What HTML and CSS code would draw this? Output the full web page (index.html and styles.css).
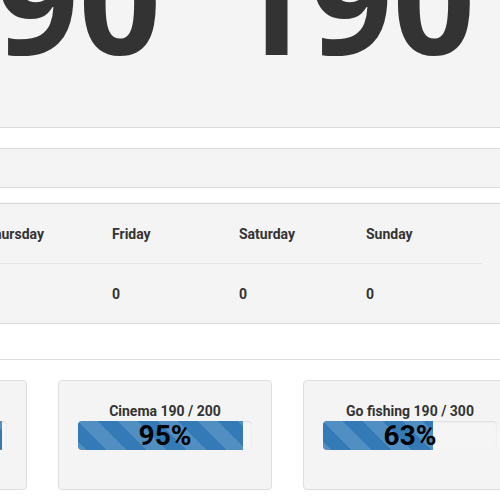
FILE: index.html
```html
<!DOCTYPE html>
<html>
<head>
<meta charset="utf-8">
<link rel="stylesheet" href="styles.css">
</head>
<body>
<div class="page">
  <section class="hero">
    <div class="big-row">
      <span class="big-number">190</span>
      <span class="big-number">190</span>
    </div>
  </section>
  <div class="spacer-a"></div>
  <div class="band"></div>
  <div class="spacer-b"></div>
  <section class="week-card">
    <div class="week-grid">
      <div class="cell head">Monday</div>
      <div class="cell head">Tuesday</div>
      <div class="cell head">Wednesday</div>
      <div class="cell head">Thursday</div>
      <div class="cell head">Friday</div>
      <div class="cell head">Saturday</div>
      <div class="cell head">Sunday</div>
      <div class="cell">0</div>
      <div class="cell">0</div>
      <div class="cell">0</div>
      <div class="cell">0</div>
      <div class="cell">0</div>
      <div class="cell">0</div>
      <div class="cell">0</div>
    </div>
  </section>
  <div class="spacer-c"></div>
  <section class="goals">
    <div class="goal-card">
      <div class="goal-title">Reading 190 / 195</div>
      <div class="progress">
        <div class="progress-fill" style="width:97%"></div>
        <div class="progress-label">97%</div>
      </div>
    </div>
    <div class="goal-card">
      <div class="goal-title">Cinema 190 / 200</div>
      <div class="progress">
        <div class="progress-fill" style="width:95%"></div>
        <div class="progress-label">95%</div>
      </div>
    </div>
    <div class="goal-card">
      <div class="goal-title">Go fishing 190 / 300</div>
      <div class="progress">
        <div class="progress-fill" style="width:63%"></div>
        <div class="progress-label">63%</div>
      </div>
    </div>
  </section>
</div>
</body>
</html>
```
FILE: styles.css
```css
html, body {
  margin: 0;
  padding: 0;
  background: #ffffff;
  overflow: hidden;
}
body {
  width: 500px;
  height: 500px;
  font-family: Roboto, "Liberation Sans", sans-serif;
  color: #333333;
}
.page {
  display: flex;
  flex-direction: column;
}
.hero {
  height: 127px;
  background: #f4f4f4;
  border-bottom: 1px solid #dcdcdc;
  overflow: hidden;
}
.big-row {
  display: flex;
  gap: 67px;
  margin-top: -73px;
  margin-left: -86px;
  width: max-content;
}
.big-number {
  font-family: "Open Sans", sans-serif;
  font-weight: 700;
  font-size: 144px;
  line-height: 1;
  color: #333333;
  white-space: nowrap;
}
.spacer-a {
  height: 20px;
}
.band {
  height: 38px;
  background: #f4f4f4;
  border-top: 1px solid #dcdcdc;
  border-bottom: 1px solid #dcdcdc;
}
.spacer-b {
  height: 15px;
}
.week-card {
  background: #f4f4f4;
  border-top: 1px solid #d8d8d8;
  border-bottom: 1px solid #dcdcdc;
  box-shadow: 0 -1px 1px rgba(0,0,0,0.04);
  overflow: hidden;
}
.week-grid {
  display: grid;
  grid-template-columns: repeat(6, 127px) 124px;
  grid-template-rows: 60px 59px;
  margin-left: -404px;
  width: max-content;
}
.cell {
  display: flex;
  align-items: center;
  padding: 0 8px;
  font-size: 14px;
  font-weight: 700;
  color: #333333;
  white-space: nowrap;
}
.cell.head {
  border-bottom: 1px solid #e6e6e6;
}
.spacer-c {
  height: 35px;
  border-bottom: 1px solid #dcdcdc;
}
.goals {
  display: flex;
  gap: 31px;
  margin-top: 20px;
  margin-left: -187px;
}
.goal-card {
  flex: 0 0 auto;
  box-sizing: border-box;
  width: 214px;
  height: 110px;
  background: #f4f4f4;
  border: 1px solid #dedede;
  border-radius: 4px;
  padding: 20px 19px 0;
}
.goal-title {
  text-align: center;
  font-size: 14px;
  font-weight: 700;
  line-height: 20px;
  color: #333333;
  white-space: nowrap;
}
.progress {
  position: relative;
  height: 29px;
  background: #f5f5f5;
  border-radius: 4px;
  box-shadow: inset 0 1px 2px rgba(0,0,0,0.1);
  overflow: hidden;
}
.progress-fill {
  height: 100%;
  background-color: #337ab7;
  background-image: linear-gradient(45deg, rgba(255,255,255,0.15) 25%, transparent 25%, transparent 50%, rgba(255,255,255,0.15) 50%, rgba(255,255,255,0.15) 75%, transparent 75%, transparent);
  background-size: 40px 40px;
}
.progress-label {
  position: absolute;
  inset: 0;
  text-align: center;
  font-size: 28px;
  font-weight: 700;
  line-height: 29px;
  color: #000000;
}
```
